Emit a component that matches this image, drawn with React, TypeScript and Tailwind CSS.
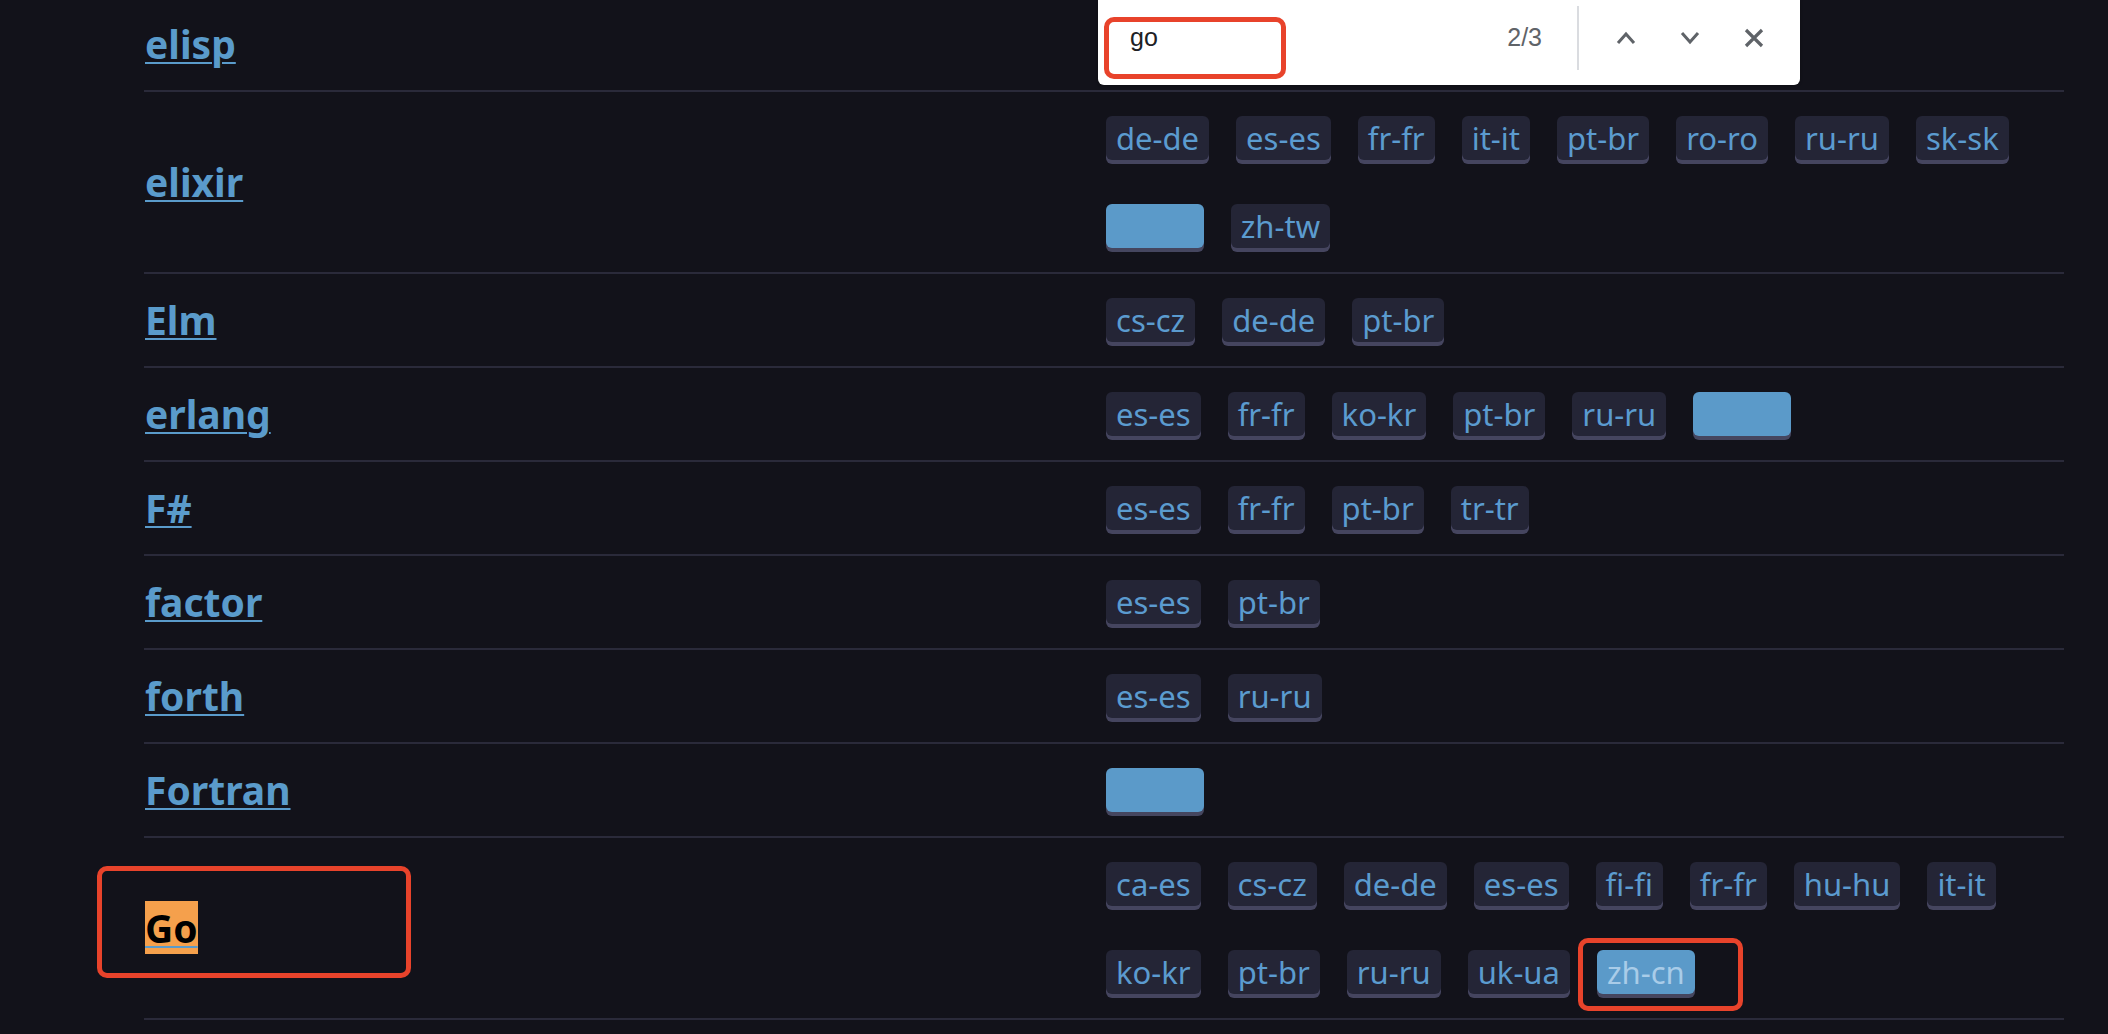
import React from "react";

type Tag = { label: string; hit?: "empty" | "text" };

interface Row {
  name: string;
  tags: Tag[];
  found?: boolean;
}

const t = (label: string): Tag => ({ label });

const rows: Row[] = [
  { name: "elisp", tags: [t("es-es"), t("pt-br")] },
  {
    name: "elixir",
    tags: [
      t("de-de"),
      t("es-es"),
      t("fr-fr"),
      t("it-it"),
      t("pt-br"),
      t("ro-ro"),
      t("ru-ru"),
      t("sk-sk"),
      { label: "zh-cn", hit: "empty" },
      t("zh-tw"),
    ],
  },
  { name: "Elm", tags: [t("cs-cz"), t("de-de"), t("pt-br")] },
  {
    name: "erlang",
    tags: [
      t("es-es"),
      t("fr-fr"),
      t("ko-kr"),
      t("pt-br"),
      t("ru-ru"),
      { label: "zh-cn", hit: "empty" },
    ],
  },
  { name: "F#", tags: [t("es-es"), t("fr-fr"), t("pt-br"), t("tr-tr")] },
  { name: "factor", tags: [t("es-es"), t("pt-br")] },
  { name: "forth", tags: [t("es-es"), t("ru-ru")] },
  { name: "Fortran", tags: [{ label: "zh-cn", hit: "empty" }] },
  {
    name: "Go",
    found: true,
    tags: [
      t("ca-es"),
      t("cs-cz"),
      t("de-de"),
      t("es-es"),
      t("fi-fi"),
      t("fr-fr"),
      t("hu-hu"),
      t("it-it"),
      t("ko-kr"),
      t("pt-br"),
      t("ru-ru"),
      t("uk-ua"),
      { label: "zh-cn", hit: "text" },
    ],
  },
];

const LangTag = ({ tag }: { tag: Tag }) => {
  if (tag.hit === "empty") {
    return (
      <span className="h-[44px] rounded-[6px] bg-[#5b9ac9] px-[10px] text-[31px] leading-[44px] text-[#5b9ac9] shadow-[0_4px_0_#45465f]">
        {tag.label}
      </span>
    );
  }
  if (tag.hit === "text") {
    return (
      <span className="h-[44px] rounded-[6px] bg-[#5b9ac9] px-[10px] text-[31px] leading-[44px] text-[#a9cce8] shadow-[0_4px_0_#45465f]">
        {tag.label}
      </span>
    );
  }
  return (
    <span className="h-[44px] rounded-[6px] bg-[#242536] px-[10px] text-[31px] leading-[44px] text-[#5b9bcf] shadow-[0_4px_0_#45455f]">
      {tag.label}
    </span>
  );
};

const FindBar = () => (
  <div className="absolute left-[1098px] top-0 h-[85px] w-[702px] rounded-b-[6px] bg-white shadow-[0_1px_3px_rgba(0,0,0,0.3)]">
    <div className="flex h-[76px] items-center pl-[32px] pr-[14px] font-['Liberation_Sans',Arial,sans-serif]">
      <span className="flex-1 text-[25px] text-[#202124]">go</span>
      <span className="text-[25px] text-[#5f6368]">2/3</span>
      <div className="ml-[35px] mr-[15px] h-[64px] w-[2px] bg-[#dadce0]" />
      <button className="flex h-[64px] w-[64px] items-center justify-center">
        <svg width="20" height="14" viewBox="0 0 20 14" fill="none">
          <path d="M2 12 L10 3 L18 12" stroke="#5f6368" strokeWidth="3" />
        </svg>
      </button>
      <button className="flex h-[64px] w-[64px] items-center justify-center">
        <svg width="20" height="14" viewBox="0 0 20 14" fill="none">
          <path d="M2 2 L10 11 L18 2" stroke="#5f6368" strokeWidth="3" />
        </svg>
      </button>
      <button className="flex h-[64px] w-[64px] items-center justify-center">
        <svg width="20" height="20" viewBox="0 0 20 20" fill="none">
          <path d="M2 2 L18 18 M18 2 L2 18" stroke="#5f6368" strokeWidth="3.2" />
        </svg>
      </button>
    </div>
  </div>
);

export default function App() {
  return (
    <div className="relative h-[1034px] w-full overflow-hidden bg-[#12121a] font-['Noto_Sans',sans-serif]">
      <div className="-mt-[2px] ml-[144px] w-[1920px]">
        {rows.map((row) => (
          <div
            key={row.name}
            className="grid grid-cols-[962px_1fr] border-b-2 border-[#2a2a3a]"
          >
            <div className="flex items-center pl-[1px]">
              {row.found ? (
                <a className="text-[39px] font-bold leading-[54px] underline decoration-[#5a9bcb] decoration-2 underline-offset-[3px]">
                  <span className="bg-[#f5a04c] text-black">{row.name}</span>
                </a>
              ) : (
                <a className="text-[39px] font-bold leading-[54px] text-[#5a9bcb] underline decoration-2 underline-offset-[3px]">
                  {row.name}
                </a>
              )}
            </div>
            <div className="flex flex-wrap gap-x-[27px] gap-y-[44px] py-[24px]">
              {row.tags.map((tag, i) => (
                <LangTag key={i} tag={tag} />
              ))}
            </div>
          </div>
        ))}
      </div>

      <FindBar />

      {/* annotation boxes */}
      <div className="absolute left-[1104px] top-[17px] h-[62px] w-[182px] rounded-[10px] border-[5px] border-[#e8432b]" />
      <div className="absolute left-[97px] top-[866px] h-[112px] w-[314px] rounded-[10px] border-[5px] border-[#e8432b]" />
      <div className="absolute left-[1578px] top-[938px] h-[73px] w-[165px] rounded-[10px] border-[5px] border-[#e8432b]" />
    </div>
  );
}
